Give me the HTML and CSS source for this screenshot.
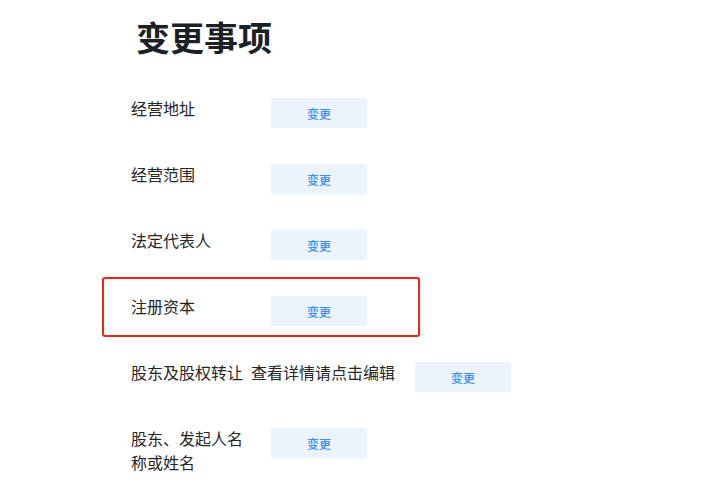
FILE: index.html
```html
<!DOCTYPE html>
<html lang="zh-CN">
<head>
    <meta charset="UTF-8">
    <meta name="viewport" content="width=device-width, initial-scale=1.0">
    <title>变更事项</title>
    <link rel="stylesheet" href="styles.css">
</head>
<body>
    <div class="page">
        <h2 class="title">变更事项</h2>
        <div class="items">
            <div class="item">
                <span class="label">经营地址</span>
                <button class="btn">变更</button>
            </div>
            <div class="item">
                <span class="label">经营范围</span>
                <button class="btn">变更</button>
            </div>
            <div class="item">
                <span class="label">法定代表人</span>
                <button class="btn">变更</button>
            </div>
            <div class="item marked">
                <span class="label">注册资本</span>
                <button class="btn">变更</button>
            </div>
            <div class="item">
                <span class="label">股东及股权转让</span>
                <span class="value">查看详情请点击编辑</span>
                <button class="btn">变更</button>
            </div>
            <div class="item">
                <span class="label">股东、发起人名称或姓名</span>
                <button class="btn">变更</button>
            </div>
        </div>
    </div>
</body>
</html>
```

FILE: styles.css
```css
body { margin: 0; background: #fff; font-family: "Noto Sans CJK SC", "Noto Sans", sans-serif; color: #262626; }
.page { padding: 0 0 0 131px; }
.title { margin: 0; padding: 17px 0 0 5px; font-size: 34px; line-height: 40px; font-weight: 700; color: #1b1f26; }
.items { display: flex; flex-direction: column; gap: 36px; padding-top: 41px; }
.item { display: flex; align-items: flex-start; position: relative; }
.label { width: 120px; margin-top: -2px; font-size: 16px; line-height: 24px; color: #262626; }
.value { margin-top: -2px; font-size: 16px; line-height: 24px; color: #262626; }
.btn { width: 96px; height: 30px; margin-left: 20px; border: none; background: #ebf3fc; color: #3a8ef6; font-family: inherit; font-size: 12px; font-weight: 500; padding: 0; cursor: pointer; }
.marked::after { content: ""; position: absolute; left: -29px; top: -19px; width: 314px; height: 56px; border: 2px solid #f5221a; border-radius: 3px; }
```
